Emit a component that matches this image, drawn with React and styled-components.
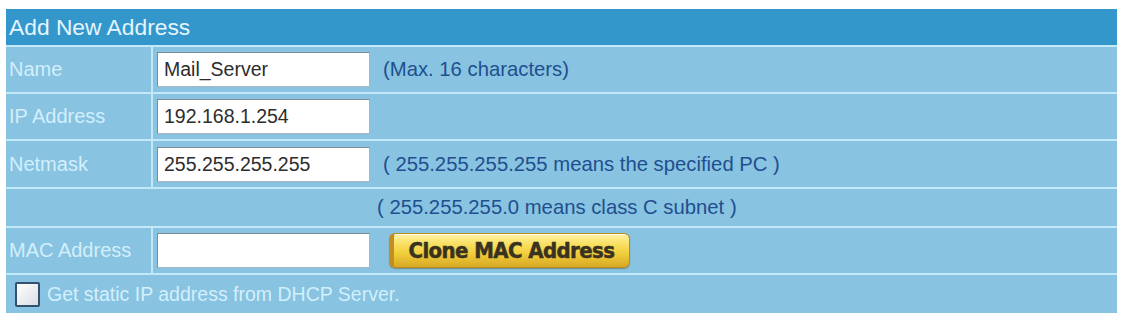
import React from "react";
import styled, { createGlobalStyle } from "styled-components";

const GlobalStyle = createGlobalStyle`
  html, body {
    margin: 0;
    padding: 0;
    background: #ffffff;
    font-family: "Liberation Sans", Arial, sans-serif;
  }
`;

const Page = styled.div`
  padding: 9px 6px 0 6px;
`;

const Table = styled.div`
  width: 1111px;
  display: grid;
  gap: 2px;
  background: #c3e8f8;
`;

const Header = styled.div`
  height: 36px;
  display: flex;
  align-items: center;
  padding-left: 3px;
  background: #3497cb;
  color: #e4f5fd;
  font-size: 22.8px;
`;

const Row = styled.div`
  display: grid;
  grid-template-columns: 145px 1fr;
  gap: 2px;
  height: ${(p) => p.h}px;
`;

const Label = styled.div`
  display: flex;
  align-items: center;
  padding-left: 3px;
  background: #88c3e1;
  color: #d3effc;
  font-size: 20px;
`;

const Value = styled.div`
  display: flex;
  align-items: center;
  gap: 13px;
  padding-left: 4px;
  background: #88c3e1;
`;

const FullRow = styled.div`
  display: flex;
  align-items: center;
  gap: 7px;
  height: ${(p) => p.h}px;
  padding-left: ${(p) => p.pl}px;
  background: #88c3e1;
`;

const Input = styled.input`
  box-sizing: border-box;
  width: 213px;
  height: 35px;
  margin: 0;
  padding: 0 6px;
  border: 1px solid #a9b6bf;
  border-top-color: #7f8b93;
  border-left-color: #7f8b93;
  background: #ffffff;
  color: #2d2d2d;
  font-family: "Liberation Sans", Arial, sans-serif;
  font-size: 19.5px;
  outline: none;
`;

const Hint = styled.span`
  color: #1f4f8f;
  font-size: 20.3px;
  white-space: nowrap;
`;

const GoldButton = styled.button`
  box-sizing: border-box;
  width: 241px;
  height: 35px;
  margin-left: 6px;
  padding: 0;
  border: 1px solid #b98c1c;
  border-left: 5px solid #c38e1e;
  border-radius: 6px;
  background: linear-gradient(
    #fff3a8 0%,
    #f9e063 30%,
    #f1cd3a 60%,
    #d7a925 100%
  );
  box-shadow: inset 0 1px 0 rgba(255, 255, 255, 0.7),
    0 1px 1px rgba(90, 70, 10, 0.4);
  color: #3a3220;
  font-family: "DejaVu Sans", sans-serif;
  font-stretch: condensed;
  font-weight: bold;
  font-size: 22px;
  letter-spacing: -0.6px;
  -webkit-text-stroke: 0.5px #3a3220;
  cursor: pointer;
`;

const Check = styled.span`
  box-sizing: border-box;
  width: 25px;
  height: 25px;
  border: 2px solid #34506c;
  border-radius: 2px;
  background: linear-gradient(135deg, #ffffff, #d8dde4);
`;

const CheckText = styled.span`
  color: #d3effc;
  font-size: 19.5px;
`;

export default function App() {
  return (
    <Page>
      <GlobalStyle />
      <Table>
        <Header>Add New Address</Header>
        <Row h={45}>
          <Label>Name</Label>
          <Value>
            <Input defaultValue="Mail_Server" />
            <Hint>(Max. 16 characters)</Hint>
          </Value>
        </Row>
        <Row h={45}>
          <Label>IP Address</Label>
          <Value>
            <Input defaultValue="192.168.1.254" />
          </Value>
        </Row>
        <Row h={46}>
          <Label>Netmask</Label>
          <Value>
            <Input defaultValue="255.255.255.255" />
            <Hint>( 255.255.255.255 means the specified PC )</Hint>
          </Value>
        </Row>
        <FullRow h={37} pl={371}>
          <Hint>( 255.255.255.0 means class C subnet )</Hint>
        </FullRow>
        <Row h={45}>
          <Label>MAC Address</Label>
          <Value>
            <Input defaultValue="" />
            <GoldButton>Clone MAC Address</GoldButton>
          </Value>
        </Row>
        <FullRow h={38} pl={9}>
          <Check />
          <CheckText>Get static IP address from DHCP Server.</CheckText>
        </FullRow>
      </Table>
    </Page>
  );
}
